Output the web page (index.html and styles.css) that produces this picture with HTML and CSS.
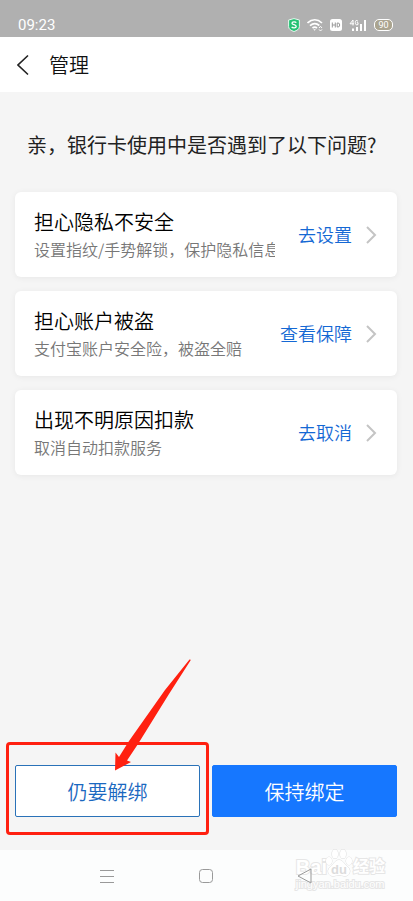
FILE: index.html
```html
<!DOCTYPE html>
<html lang="zh-CN">

<head>
    <meta charset="UTF-8">
    <meta name="viewport" content="width=device-width, initial-scale=1.0">
    <title>管理</title>
    <link rel="stylesheet" href="styles.css">
</head>

<body>
    <div class="status-bar">
        <span class="status-bar__time">09:23</span>
        <div class="status-bar__icons">
            <svg width="12" height="14" viewBox="0 0 12 14">
                <path d="M6 .6 11.4 2v6.6C11.4 11 9 12.600 6 13.500 3 12.600.6 11 .6 8.600V2z" fill="#25c274" stroke="#e4f7ed" />
                <path d="M8.300 4.700C7.600 3.700 4 3.400 4 5.300 4 7.200 8.200 6.200 8.200 8.400 8.200 10.400 4.500 10.200 3.700 8.900" fill="none" stroke="#fff" stroke-width="1.300" />
            </svg>
            <svg width="16" height="14" viewBox="0 0 16 14" fill="none" stroke="#fff" stroke-width="1.700">
                <path d="M.5 5C5 .8 10.500.8 15 5M3 7.700C6 5 9.500 5 12.300 7.500M5.500 10C7 8.800 8.500 8.800 10 10" />
                <path d="M6.300 11.300h2.600L7.600 12.800z" fill="#fff" stroke="none" />
                <path d="M12 10 13.500 8.300 15 10M12 11.400 13.500 13 15 11.400" stroke-width="1" />
            </svg>
            <svg width="12" height="12" viewBox="0 0 12 12">
                <rect width="12" height="12" rx="2.500" fill="#fff" />
                <path d="M2.300 3.500v5M5.300 3.500v5M2.300 6h3M7.200 4v4h.8Q9.700 8 9.700 6T8 4z" fill="none" stroke="#999" />
            </svg>
            <svg width="18" height="14" viewBox="0 0 18 14" fill="none" stroke="#fff">
                <path d="M4 7.500V2L1 5.800H5M9 3.200Q6.300 1.200 6.300 4.500T9 6.500V4.700H7.800" />
                <path d="M4 10.500V13M8 9V13M12 6V13M16 2V13" stroke-width="2" />
            </svg>
            <span class="battery">90</span>
        </div>
    </div>

    <header class="nav-bar">
        <a class="nav-bar__back" href="#" aria-label="返回">
            <svg width="14" height="22" viewBox="0 0 14 22" fill="none" stroke="#222" stroke-width="1.600">
                <path d="M11 1.500 1 11 11 20.500" />
            </svg>
        </a>
        <h1>管理</h1>
    </header>

    <main>
        <h2>亲，银行卡使用中是否遇到了以下问题?</h2>

        <div class="card-list">
            <a class="card" href="#">
                <div class="card__text">
                    <h3>担心隐私不安全</h3>
                    <p>设置指纹/手势解锁，保护隐私信息</p>
                </div>
                <span class="card__action">去设置</span>
                <svg class="card__arrow" width="11" height="18" viewBox="0 0 11 18">
                    <path d="M1 1 9 9 1 17" />
                </svg>
            </a>

            <a class="card" href="#">
                <div class="card__text">
                    <h3>担心账户被盗</h3>
                    <p>支付宝账户安全险，被盗全赔</p>
                </div>
                <span class="card__action">查看保障</span>
                <svg class="card__arrow" width="11" height="18" viewBox="0 0 11 18">
                    <path d="M1 1 9 9 1 17" />
                </svg>
            </a>

            <a class="card" href="#">
                <div class="card__text">
                    <h3>出现不明原因扣款</h3>
                    <p>取消自动扣款服务</p>
                </div>
                <span class="card__action">去取消</span>
                <svg class="card__arrow" width="11" height="18" viewBox="0 0 11 18">
                    <path d="M1 1 9 9 1 17" />
                </svg>
            </a>
        </div>

        <div class="button-row">
            <div class="highlighted">
                <button class="button" type="button">仍要解绑</button>
                <div class="highlighted__frame"></div>
                <svg class="highlighted__arrow" width="78" height="114" viewBox="0 0 78 114">
                    <path d="M75.500 1.500Q77 1 76.500 2.500L55 36 24 86 13 102.500 17 104 1 112.500 1.500 94.500 5 99 15 83 51 32z" fill="#ff2010" />
                </svg>
            </div>
            <button class="button button--primary" type="button">保持绑定</button>
        </div>
    </main>

    <footer class="system-nav">
        <div class="watermark">
            <div class="watermark__brand">
                <span>Bai</span>
                <svg width="28" height="30" viewBox="0 0 28 30" fill="#fff" stroke="#dcdcdc">
                    <ellipse cx="4" cy="13" rx="3" ry="4" />
                    <ellipse cx="10" cy="6" rx="3" ry="4.500" />
                    <ellipse cx="18" cy="6" rx="3" ry="4.500" />
                    <ellipse cx="24" cy="13" rx="3" ry="4" />
                    <path d="M14 12C18 12 19 16 23 19 27 23 24 29 19 28 16 27 12 27 9 28 4 29 1 23 5 19 9 16 10 12 14 12z" />
                    <text x="14" y="26" text-anchor="middle" class="watermark__du">du</text>
                </svg>
                <span class="watermark__cjk">经验</span>
            </div>
            <span class="watermark__site">jingyan.baidu.com</span>
        </div>

        <button type="button" aria-label="菜单">
            <svg width="16" height="16" viewBox="0 0 16 16">
                <path d="M1 2.500H15M1 8.500H15M1 14.500H15" />
            </svg>
        </button>
        <button type="button" aria-label="主页">
            <svg width="16" height="16" viewBox="0 0 16 16">
                <rect x="1.500" y="1.500" width="13" height="13" rx="3" />
            </svg>
        </button>
        <button type="button" aria-label="返回">
            <svg width="16" height="16" viewBox="0 0 16 16">
                <path d="M14 1V15L1 8z" />
            </svg>
        </button>
    </footer>
</body>

</html>
```
FILE: styles.css
```css
* {
    box-sizing: border-box;
}

body {
    display: flex;
    flex-direction: column;
    min-height: 100vh;
    margin: 0;
    background-color: #f5f5f5;
    color: #111;
    font-family: "Noto Sans CJK SC", "Noto Sans", sans-serif;
    font-weight: 350;
}

h1,
h2,
h3,
p {
    margin: 0;
    font-weight: inherit;
}

a {
    color: inherit;
    text-decoration: none;
}

button {
    font-family: inherit;
    font-weight: inherit;
    cursor: pointer;
}

svg {
    display: block;
    flex-shrink: 0;
}

.status-bar {
    display: flex;
    justify-content: space-between;
    align-items: center;
    height: 37px;
    padding: 13px 20px 0 18px;
    background-color: #b0b0b0;
    color: white;
}

.status-bar__time {
    font-family: Roboto, sans-serif;
    font-size: 15px;
    font-weight: 400;
    line-height: 20px;
}

.status-bar__icons {
    display: flex;
    align-items: center;
    gap: 7px;
}

.battery {
    width: 19px;
    border: 1px solid white;
    border-radius: 5px;
    background-color: #aaa48f;
    font-family: Roboto, sans-serif;
    font-size: 9px;
    font-weight: 400;
    line-height: 10px;
    text-align: center;
}

.nav-bar {
    display: flex;
    align-items: center;
    gap: 18px;
    height: 55px;
    padding: 0 17px;
    background-color: white;
}

.nav-bar h1 {
    font-size: 20px;
    line-height: 28px;
}

main {
    display: flex;
    flex-direction: column;
    flex: 1;
    padding: 38px 16px 33px 15px;
}

h2 {
    padding-left: 12px;
    color: #222;
    font-size: 20px;
    font-weight: 400;
    line-height: 30px;
    white-space: nowrap;
}

.card-list {
    display: flex;
    flex-direction: column;
    gap: 14px;
    margin-top: 32px;
}

.card {
    display: flex;
    align-items: center;
    height: 85px;
    padding: 0 20px 0 19px;
    border-radius: 6px;
    background-color: white;
    box-shadow: 0 1px 6px rgba(0, 0, 0, 0.06);
}

.card__text {
    flex: 1;
    min-width: 0;
    margin-right: 23px;
}

.card h3 {
    color: black;
    font-size: 20px;
    line-height: 28px;
}

.card p {
    overflow: hidden;
    color: #777;
    font-size: 16px;
    line-height: 26px;
    white-space: nowrap;
}

.card__action {
    padding-bottom: 2px;
    color: #1468d4;
    font-size: 18px;
    line-height: 26px;
}

.card__arrow {
    margin-left: 14px;
    fill: none;
    stroke: #c4c4c4;
    stroke-width: 2;
}

.button-row {
    display: grid;
    grid-template-columns: 1fr 1fr;
    gap: 12px;
    margin-top: auto;
}

.button {
    width: 100%;
    height: 52px;
    padding: 0;
    border: 1px solid #2a72b8;
    border-radius: 2px;
    background-color: white;
    color: #1a68c0;
    font-size: 20px;
}

.button--primary {
    border-color: #1677ff;
    background-color: #1677ff;
    color: white;
}

.highlighted {
    position: relative;
}

.highlighted__frame {
    position: absolute;
    inset: -23px -9px -18px;
    border: 3px solid #ff2010;
    border-radius: 4px;
    pointer-events: none;
}

.highlighted__arrow {
    position: absolute;
    left: 99px;
    bottom: 45px;
    pointer-events: none;
}

.system-nav {
    position: relative;
    display: flex;
    justify-content: center;
    gap: 83px;
    height: 51px;
    padding-right: 2px;
    background-color: #fcfdfd;
}

.system-nav button {
    position: relative;
    padding: 0;
    border: none;
    background: none;
}

.system-nav button svg {
    fill: none;
    stroke: #999;
}

.watermark {
    position: absolute;
    right: 28px;
    bottom: 10px;
    color: white;
    font-family: "Liberation Sans", "Noto Sans CJK SC", sans-serif;
    font-weight: 700;
    pointer-events: none;
    -webkit-text-stroke: 2px #e6e6e6;
    paint-order: stroke fill;
}

.watermark__brand {
    display: flex;
    align-items: flex-end;
    font-size: 20px;
    line-height: 22px;
}

.watermark__brand svg {
    margin-left: -2px;
}

.watermark__du {
    fill: #dcdcdc;
    stroke: none;
    font-size: 13px;
    -webkit-text-stroke: 0;
}

.watermark__cjk {
    font-size: 16px;
}

.watermark__site {
    display: block;
    font-size: 11px;
    font-weight: 400;
    line-height: 13px;
}
```
